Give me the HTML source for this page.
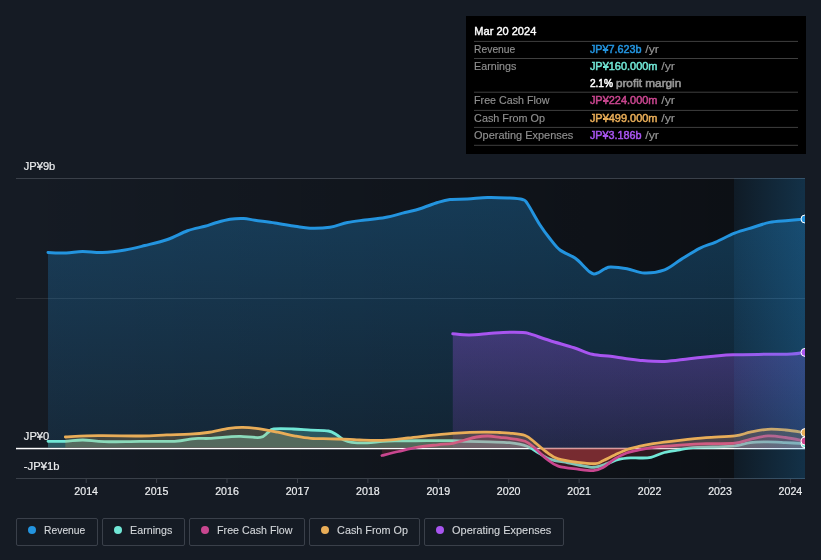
<!DOCTYPE html>
<html><head><meta charset="utf-8"><title>Earnings and Revenue History</title>
<style>
html,body{margin:0;padding:0;background:#151b24;}
body{width:821px;height:560px;overflow:hidden;}
svg{display:block;}
text{font-family:'Liberation Sans', sans-serif;font-size:10.8px;}
svg{will-change:transform;}
</style></head><body>
<svg width="821" height="560" viewBox="0 0 821 560">
<defs>
<linearGradient id="gPast" x1="0" y1="0" x2="1" y2="0"><stop offset="0" stop-color="#000" stop-opacity="0"/><stop offset="1" stop-color="#000" stop-opacity="0.42"/></linearGradient>
<linearGradient id="gHi" x1="0" y1="0" x2="1" y2="0"><stop offset="0" stop-color="#2394df" stop-opacity="0.07"/><stop offset="1" stop-color="#2394df" stop-opacity="0.24"/></linearGradient>
<linearGradient id="gRev" gradientUnits="userSpaceOnUse" x1="0" y1="197" x2="0" y2="448"><stop offset="0" stop-color="#2394df" stop-opacity="0.30"/><stop offset="1" stop-color="#2394df" stop-opacity="0.12"/></linearGradient>
<linearGradient id="gOpex" gradientUnits="userSpaceOnUse" x1="0" y1="332" x2="0" y2="448"><stop offset="0" stop-color="#a855f0" stop-opacity="0.30"/><stop offset="1" stop-color="#a855f0" stop-opacity="0.12"/></linearGradient>
<clipPath id="cPos"><rect x="16" y="170" width="789" height="277.8"/></clipPath>
<clipPath id="cNeg"><rect x="16" y="447.8" width="789" height="40"/></clipPath>
<clipPath id="cNeg2"><rect x="16" y="449.3" width="789" height="40"/></clipPath>
<clipPath id="cPlot"><rect x="16" y="170" width="789" height="320"/></clipPath>
</defs>
<rect width="821" height="560" fill="#151b24"/>

<rect x="16" y="178" width="718" height="301" fill="url(#gPast)"/>
<rect x="734" y="178" width="71" height="301" fill="#0e1218"/>
<rect x="16" y="178" width="789" height="1" fill="#3a4049"/>
<rect x="16" y="298" width="789" height="1" fill="#2a3038"/>
<rect x="16" y="447.8" width="789" height="1.5" fill="#ffffff"/>
<rect x="16" y="478" width="789" height="1" fill="#3a4049"/>
<rect x="85.7" y="479" width="1" height="4" fill="#3a4049"/>
<text x="86.2" y="495" text-anchor="middle" fill="#eceef0" stroke="#eceef0" stroke-width="0.2" textLength="23.7" lengthAdjust="spacingAndGlyphs">2014</text>
<rect x="156.1" y="479" width="1" height="4" fill="#3a4049"/>
<text x="156.6" y="495" text-anchor="middle" fill="#eceef0" stroke="#eceef0" stroke-width="0.2" textLength="23.7" lengthAdjust="spacingAndGlyphs">2015</text>
<rect x="226.5" y="479" width="1" height="4" fill="#3a4049"/>
<text x="227.0" y="495" text-anchor="middle" fill="#eceef0" stroke="#eceef0" stroke-width="0.2" textLength="23.7" lengthAdjust="spacingAndGlyphs">2016</text>
<rect x="297.0" y="479" width="1" height="4" fill="#3a4049"/>
<text x="297.5" y="495" text-anchor="middle" fill="#eceef0" stroke="#eceef0" stroke-width="0.2" textLength="23.7" lengthAdjust="spacingAndGlyphs">2017</text>
<rect x="367.4" y="479" width="1" height="4" fill="#3a4049"/>
<text x="367.9" y="495" text-anchor="middle" fill="#eceef0" stroke="#eceef0" stroke-width="0.2" textLength="23.7" lengthAdjust="spacingAndGlyphs">2018</text>
<rect x="437.8" y="479" width="1" height="4" fill="#3a4049"/>
<text x="438.3" y="495" text-anchor="middle" fill="#eceef0" stroke="#eceef0" stroke-width="0.2" textLength="23.7" lengthAdjust="spacingAndGlyphs">2019</text>
<rect x="508.2" y="479" width="1" height="4" fill="#3a4049"/>
<text x="508.7" y="495" text-anchor="middle" fill="#eceef0" stroke="#eceef0" stroke-width="0.2" textLength="23.7" lengthAdjust="spacingAndGlyphs">2020</text>
<rect x="578.6" y="479" width="1" height="4" fill="#3a4049"/>
<text x="579.1" y="495" text-anchor="middle" fill="#eceef0" stroke="#eceef0" stroke-width="0.2" textLength="23.7" lengthAdjust="spacingAndGlyphs">2021</text>
<rect x="649.1" y="479" width="1" height="4" fill="#3a4049"/>
<text x="649.6" y="495" text-anchor="middle" fill="#eceef0" stroke="#eceef0" stroke-width="0.2" textLength="23.7" lengthAdjust="spacingAndGlyphs">2022</text>
<rect x="719.5" y="479" width="1" height="4" fill="#3a4049"/>
<text x="720.0" y="495" text-anchor="middle" fill="#eceef0" stroke="#eceef0" stroke-width="0.2" textLength="23.7" lengthAdjust="spacingAndGlyphs">2023</text>
<rect x="789.9" y="479" width="1" height="4" fill="#3a4049"/>
<text x="790.4" y="495" text-anchor="middle" fill="#eceef0" stroke="#eceef0" stroke-width="0.2" textLength="23.7" lengthAdjust="spacingAndGlyphs">2024</text>
<g clip-path="url(#cPlot)">
<path d="M48.00,252.50C51.04,252.58 60.50,253.17 66.25,253.00C72.00,252.83 76.46,251.58 82.50,251.50C88.54,251.42 95.42,252.75 102.50,252.50C109.58,252.25 117.92,251.17 125.00,250.00C132.08,248.83 137.92,247.25 145.00,245.50C152.08,243.75 160.42,241.96 167.50,239.50C174.58,237.04 181.25,232.96 187.50,230.75C193.75,228.54 200.42,227.54 205.00,226.25C209.58,224.96 210.83,224.17 215.00,223.00C219.17,221.83 225.21,220.00 230.00,219.25C234.79,218.50 239.58,218.33 243.75,218.50C247.92,218.67 249.79,219.50 255.00,220.25C260.21,221.00 268.33,222.00 275.00,223.00C281.67,224.00 289.17,225.38 295.00,226.25C300.83,227.12 304.17,228.08 310.00,228.25C315.83,228.42 323.75,228.21 330.00,227.25C336.25,226.29 341.67,223.71 347.50,222.50C353.33,221.29 358.75,220.83 365.00,220.00C371.25,219.17 378.33,218.75 385.00,217.50C391.67,216.25 399.17,213.96 405.00,212.50C410.83,211.04 414.58,210.42 420.00,208.75C425.42,207.08 432.50,204.04 437.50,202.50C442.50,200.96 445.00,200.08 450.00,199.50C455.00,198.92 461.25,199.33 467.50,199.00C473.75,198.67 480.83,197.67 487.50,197.50C494.17,197.33 501.67,197.67 507.50,198.00C513.33,198.33 519.17,198.54 522.50,199.50C525.83,200.46 524.58,199.50 527.50,203.75C530.42,208.00 536.25,219.17 540.00,225.00C543.75,230.83 546.67,234.58 550.00,238.75C553.33,242.92 555.83,246.79 560.00,250.00C564.17,253.21 570.83,255.08 575.00,258.00C579.17,260.92 582.58,265.20 585.00,267.50C587.42,269.80 588.04,270.72 589.50,271.80C590.96,272.88 592.33,273.83 593.75,274.00C595.17,274.17 596.12,273.68 598.00,272.80C599.88,271.93 602.87,269.70 605.00,268.75C607.13,267.80 607.13,267.11 610.80,267.10C614.47,267.09 621.40,267.72 627.00,268.70C632.60,269.68 638.13,272.82 644.40,273.00C650.67,273.18 658.53,272.03 664.60,269.80C670.67,267.57 674.97,263.18 680.80,259.60C686.63,256.02 693.78,251.22 699.60,248.30C705.42,245.38 709.87,244.62 715.70,242.10C721.53,239.58 728.32,235.67 734.60,233.20C740.88,230.73 747.57,229.10 753.40,227.30C759.23,225.50 763.77,223.52 769.60,222.40C775.43,221.28 782.50,221.17 788.40,220.60C794.30,220.03 802.23,219.27 805.00,219.00L805.00,447.8L48.00,447.8Z" fill="url(#gRev)"/>
<path d="M48.00,252.50C51.04,252.58 60.50,253.17 66.25,253.00C72.00,252.83 76.46,251.58 82.50,251.50C88.54,251.42 95.42,252.75 102.50,252.50C109.58,252.25 117.92,251.17 125.00,250.00C132.08,248.83 137.92,247.25 145.00,245.50C152.08,243.75 160.42,241.96 167.50,239.50C174.58,237.04 181.25,232.96 187.50,230.75C193.75,228.54 200.42,227.54 205.00,226.25C209.58,224.96 210.83,224.17 215.00,223.00C219.17,221.83 225.21,220.00 230.00,219.25C234.79,218.50 239.58,218.33 243.75,218.50C247.92,218.67 249.79,219.50 255.00,220.25C260.21,221.00 268.33,222.00 275.00,223.00C281.67,224.00 289.17,225.38 295.00,226.25C300.83,227.12 304.17,228.08 310.00,228.25C315.83,228.42 323.75,228.21 330.00,227.25C336.25,226.29 341.67,223.71 347.50,222.50C353.33,221.29 358.75,220.83 365.00,220.00C371.25,219.17 378.33,218.75 385.00,217.50C391.67,216.25 399.17,213.96 405.00,212.50C410.83,211.04 414.58,210.42 420.00,208.75C425.42,207.08 432.50,204.04 437.50,202.50C442.50,200.96 445.00,200.08 450.00,199.50C455.00,198.92 461.25,199.33 467.50,199.00C473.75,198.67 480.83,197.67 487.50,197.50C494.17,197.33 501.67,197.67 507.50,198.00C513.33,198.33 519.17,198.54 522.50,199.50C525.83,200.46 524.58,199.50 527.50,203.75C530.42,208.00 536.25,219.17 540.00,225.00C543.75,230.83 546.67,234.58 550.00,238.75C553.33,242.92 555.83,246.79 560.00,250.00C564.17,253.21 570.83,255.08 575.00,258.00C579.17,260.92 582.58,265.20 585.00,267.50C587.42,269.80 588.04,270.72 589.50,271.80C590.96,272.88 592.33,273.83 593.75,274.00C595.17,274.17 596.12,273.68 598.00,272.80C599.88,271.93 602.87,269.70 605.00,268.75C607.13,267.80 607.13,267.11 610.80,267.10C614.47,267.09 621.40,267.72 627.00,268.70C632.60,269.68 638.13,272.82 644.40,273.00C650.67,273.18 658.53,272.03 664.60,269.80C670.67,267.57 674.97,263.18 680.80,259.60C686.63,256.02 693.78,251.22 699.60,248.30C705.42,245.38 709.87,244.62 715.70,242.10C721.53,239.58 728.32,235.67 734.60,233.20C740.88,230.73 747.57,229.10 753.40,227.30C759.23,225.50 763.77,223.52 769.60,222.40C775.43,221.28 782.50,221.17 788.40,220.60C794.30,220.03 802.23,219.27 805.00,219.00" fill="none" stroke="#2394df" stroke-width="3" stroke-linejoin="round" stroke-linecap="round"/>
<path d="M48.00,441.30C50.88,441.30 59.48,441.52 65.30,441.30C71.12,441.08 76.40,439.93 82.90,440.00C89.40,440.07 94.78,441.48 104.30,441.70C113.82,441.92 128.30,441.37 140.00,441.30C151.70,441.23 165.83,441.72 174.50,441.30C183.17,440.88 187.75,439.28 192.00,438.80C196.25,438.32 197.08,438.47 200.00,438.40C202.92,438.33 204.67,438.67 209.50,438.40C214.33,438.13 223.80,437.13 229.00,436.80C234.20,436.47 235.50,436.30 240.70,436.40C245.90,436.50 255.65,438.05 260.20,437.40C264.75,436.75 265.73,433.90 268.00,432.50C270.27,431.10 269.58,429.58 273.80,429.00C278.02,428.42 287.12,428.80 293.30,429.00C299.48,429.20 305.05,429.87 310.90,430.20C316.75,430.53 324.18,430.28 328.40,431.00C332.62,431.72 333.60,433.00 336.20,434.50C338.80,436.00 341.42,438.70 344.00,440.00C346.58,441.30 347.82,441.82 351.70,442.30C355.58,442.78 362.10,443.07 367.30,442.90C372.50,442.73 377.70,441.63 382.90,441.30C388.10,440.97 391.03,441.00 398.50,440.90C405.97,440.80 418.62,440.73 427.70,440.70C436.78,440.67 446.50,440.60 453.00,440.70C459.50,440.80 460.53,441.10 466.70,441.30C472.87,441.50 482.87,441.67 490.00,441.90C497.13,442.13 503.33,441.98 509.50,442.70C515.67,443.42 522.13,444.48 527.00,446.20C531.87,447.92 534.80,450.80 538.70,453.00C542.60,455.20 545.52,457.77 550.40,459.40C555.28,461.03 561.82,461.58 568.00,462.80C574.18,464.02 582.95,465.97 587.50,466.70C592.05,467.43 592.05,467.70 595.30,467.20C598.55,466.70 603.10,465.00 607.00,463.70C610.90,462.40 614.80,460.37 618.70,459.40C622.60,458.43 626.85,458.13 630.40,457.90C633.95,457.67 636.57,458.10 640.00,458.00C643.43,457.90 646.95,458.22 651.00,457.30C655.05,456.38 659.52,453.75 664.30,452.50C669.08,451.25 674.93,450.62 679.70,449.80C684.47,448.98 687.38,448.07 692.90,447.60C698.42,447.13 705.82,447.28 712.80,447.00C719.78,446.72 728.57,446.63 734.80,445.90C741.03,445.17 744.68,443.27 750.20,442.60C755.72,441.93 762.02,441.90 767.90,441.90C773.78,441.90 779.32,442.30 785.50,442.60C791.68,442.90 801.75,443.52 805.00,443.70L805.00,447.8L48.00,447.8Z" fill="#71e7d6" fill-opacity="0.25" clip-path="url(#cPos)"/>
<path d="M48.00,441.30C50.88,441.30 59.48,441.52 65.30,441.30C71.12,441.08 76.40,439.93 82.90,440.00C89.40,440.07 94.78,441.48 104.30,441.70C113.82,441.92 128.30,441.37 140.00,441.30C151.70,441.23 165.83,441.72 174.50,441.30C183.17,440.88 187.75,439.28 192.00,438.80C196.25,438.32 197.08,438.47 200.00,438.40C202.92,438.33 204.67,438.67 209.50,438.40C214.33,438.13 223.80,437.13 229.00,436.80C234.20,436.47 235.50,436.30 240.70,436.40C245.90,436.50 255.65,438.05 260.20,437.40C264.75,436.75 265.73,433.90 268.00,432.50C270.27,431.10 269.58,429.58 273.80,429.00C278.02,428.42 287.12,428.80 293.30,429.00C299.48,429.20 305.05,429.87 310.90,430.20C316.75,430.53 324.18,430.28 328.40,431.00C332.62,431.72 333.60,433.00 336.20,434.50C338.80,436.00 341.42,438.70 344.00,440.00C346.58,441.30 347.82,441.82 351.70,442.30C355.58,442.78 362.10,443.07 367.30,442.90C372.50,442.73 377.70,441.63 382.90,441.30C388.10,440.97 391.03,441.00 398.50,440.90C405.97,440.80 418.62,440.73 427.70,440.70C436.78,440.67 446.50,440.60 453.00,440.70C459.50,440.80 460.53,441.10 466.70,441.30C472.87,441.50 482.87,441.67 490.00,441.90C497.13,442.13 503.33,441.98 509.50,442.70C515.67,443.42 522.13,444.48 527.00,446.20C531.87,447.92 534.80,450.80 538.70,453.00C542.60,455.20 545.52,457.77 550.40,459.40C555.28,461.03 561.82,461.58 568.00,462.80C574.18,464.02 582.95,465.97 587.50,466.70C592.05,467.43 592.05,467.70 595.30,467.20C598.55,466.70 603.10,465.00 607.00,463.70C610.90,462.40 614.80,460.37 618.70,459.40C622.60,458.43 626.85,458.13 630.40,457.90C633.95,457.67 636.57,458.10 640.00,458.00C643.43,457.90 646.95,458.22 651.00,457.30C655.05,456.38 659.52,453.75 664.30,452.50C669.08,451.25 674.93,450.62 679.70,449.80C684.47,448.98 687.38,448.07 692.90,447.60C698.42,447.13 705.82,447.28 712.80,447.00C719.78,446.72 728.57,446.63 734.80,445.90C741.03,445.17 744.68,443.27 750.20,442.60C755.72,441.93 762.02,441.90 767.90,441.90C773.78,441.90 779.32,442.30 785.50,442.60C791.68,442.90 801.75,443.52 805.00,443.70L805.00,447.8L48.00,447.8Z" fill="#b83c42" fill-opacity="0.2" clip-path="url(#cNeg)"/>
<path d="M48.00,441.30C50.88,441.30 59.48,441.52 65.30,441.30C71.12,441.08 76.40,439.93 82.90,440.00C89.40,440.07 94.78,441.48 104.30,441.70C113.82,441.92 128.30,441.37 140.00,441.30C151.70,441.23 165.83,441.72 174.50,441.30C183.17,440.88 187.75,439.28 192.00,438.80C196.25,438.32 197.08,438.47 200.00,438.40C202.92,438.33 204.67,438.67 209.50,438.40C214.33,438.13 223.80,437.13 229.00,436.80C234.20,436.47 235.50,436.30 240.70,436.40C245.90,436.50 255.65,438.05 260.20,437.40C264.75,436.75 265.73,433.90 268.00,432.50C270.27,431.10 269.58,429.58 273.80,429.00C278.02,428.42 287.12,428.80 293.30,429.00C299.48,429.20 305.05,429.87 310.90,430.20C316.75,430.53 324.18,430.28 328.40,431.00C332.62,431.72 333.60,433.00 336.20,434.50C338.80,436.00 341.42,438.70 344.00,440.00C346.58,441.30 347.82,441.82 351.70,442.30C355.58,442.78 362.10,443.07 367.30,442.90C372.50,442.73 377.70,441.63 382.90,441.30C388.10,440.97 391.03,441.00 398.50,440.90C405.97,440.80 418.62,440.73 427.70,440.70C436.78,440.67 446.50,440.60 453.00,440.70C459.50,440.80 460.53,441.10 466.70,441.30C472.87,441.50 482.87,441.67 490.00,441.90C497.13,442.13 503.33,441.98 509.50,442.70C515.67,443.42 522.13,444.48 527.00,446.20C531.87,447.92 534.80,450.80 538.70,453.00C542.60,455.20 545.52,457.77 550.40,459.40C555.28,461.03 561.82,461.58 568.00,462.80C574.18,464.02 582.95,465.97 587.50,466.70C592.05,467.43 592.05,467.70 595.30,467.20C598.55,466.70 603.10,465.00 607.00,463.70C610.90,462.40 614.80,460.37 618.70,459.40C622.60,458.43 626.85,458.13 630.40,457.90C633.95,457.67 636.57,458.10 640.00,458.00C643.43,457.90 646.95,458.22 651.00,457.30C655.05,456.38 659.52,453.75 664.30,452.50C669.08,451.25 674.93,450.62 679.70,449.80C684.47,448.98 687.38,448.07 692.90,447.60C698.42,447.13 705.82,447.28 712.80,447.00C719.78,446.72 728.57,446.63 734.80,445.90C741.03,445.17 744.68,443.27 750.20,442.60C755.72,441.93 762.02,441.90 767.90,441.90C773.78,441.90 779.32,442.30 785.50,442.60C791.68,442.90 801.75,443.52 805.00,443.70" fill="none" stroke="#71e7d6" stroke-width="2.8" stroke-linejoin="round" stroke-linecap="round"/>
<path d="M452.80,333.80C455.53,334.00 463.22,335.03 469.20,335.00C475.18,334.97 483.02,334.03 488.70,333.60C494.38,333.17 497.62,332.60 503.30,332.40C508.98,332.20 518.33,332.15 522.80,332.40C527.27,332.65 525.63,332.55 530.10,333.90C534.57,335.25 542.28,338.18 549.60,340.50C556.92,342.82 566.88,345.50 574.00,347.80C581.12,350.10 586.22,352.88 592.30,354.30C598.38,355.72 605.03,355.60 610.50,356.30C615.97,357.00 620.10,357.82 625.10,358.50C630.10,359.18 633.88,359.92 640.50,360.40C647.12,360.88 656.68,361.68 664.80,361.40C672.92,361.12 681.07,359.55 689.20,358.70C697.33,357.85 706.30,356.95 713.60,356.30C720.90,355.65 724.07,355.13 733.00,354.80C741.93,354.47 757.45,354.42 767.20,354.30C776.95,354.18 785.20,354.42 791.50,354.10C797.80,353.78 802.75,352.68 805.00,352.40L805.00,447.8L452.80,447.8Z" fill="url(#gOpex)"/>
<path d="M452.80,333.80C455.53,334.00 463.22,335.03 469.20,335.00C475.18,334.97 483.02,334.03 488.70,333.60C494.38,333.17 497.62,332.60 503.30,332.40C508.98,332.20 518.33,332.15 522.80,332.40C527.27,332.65 525.63,332.55 530.10,333.90C534.57,335.25 542.28,338.18 549.60,340.50C556.92,342.82 566.88,345.50 574.00,347.80C581.12,350.10 586.22,352.88 592.30,354.30C598.38,355.72 605.03,355.60 610.50,356.30C615.97,357.00 620.10,357.82 625.10,358.50C630.10,359.18 633.88,359.92 640.50,360.40C647.12,360.88 656.68,361.68 664.80,361.40C672.92,361.12 681.07,359.55 689.20,358.70C697.33,357.85 706.30,356.95 713.60,356.30C720.90,355.65 724.07,355.13 733.00,354.80C741.93,354.47 757.45,354.42 767.20,354.30C776.95,354.18 785.20,354.42 791.50,354.10C797.80,353.78 802.75,352.68 805.00,352.40" fill="none" stroke="#a855f0" stroke-width="3" stroke-linejoin="round" stroke-linecap="round"/>
<path d="M381.90,455.50C384.67,454.83 392.48,452.88 398.50,451.50C404.52,450.12 411.50,448.32 418.00,447.20C424.50,446.08 431.67,445.45 437.50,444.80C443.33,444.15 448.45,444.10 453.00,443.30C457.55,442.50 460.88,441.05 464.80,440.00C468.72,438.95 472.62,437.67 476.50,437.00C480.38,436.33 484.22,435.93 488.10,436.00C491.98,436.07 496.23,437.00 499.80,437.40C503.37,437.80 505.28,437.75 509.50,438.40C513.72,439.05 520.88,439.68 525.10,441.30C529.32,442.92 531.23,445.17 534.80,448.10C538.37,451.03 542.60,455.90 546.50,458.90C550.40,461.90 553.00,464.38 558.20,466.10C563.40,467.82 571.85,468.45 577.70,469.20C583.55,469.95 589.08,470.87 593.30,470.60C597.52,470.33 599.42,469.55 603.00,467.60C606.58,465.65 610.88,461.33 614.80,458.90C618.72,456.47 622.62,454.47 626.50,453.00C630.38,451.53 633.65,451.03 638.10,450.10C642.55,449.17 646.27,448.22 653.20,447.40C660.13,446.58 670.88,445.82 679.70,445.20C688.52,444.58 696.92,444.03 706.10,443.70C715.28,443.37 727.45,443.93 734.80,443.20C742.15,442.47 744.68,440.52 750.20,439.30C755.72,438.08 762.02,436.20 767.90,435.90C773.78,435.60 779.32,436.65 785.50,437.50C791.68,438.35 801.75,440.42 805.00,441.00L805.00,447.8L381.90,447.8Z" fill="#c9468f" fill-opacity="0.16" clip-path="url(#cPos)"/>
<path d="M381.90,455.50C384.67,454.83 392.48,452.88 398.50,451.50C404.52,450.12 411.50,448.32 418.00,447.20C424.50,446.08 431.67,445.45 437.50,444.80C443.33,444.15 448.45,444.10 453.00,443.30C457.55,442.50 460.88,441.05 464.80,440.00C468.72,438.95 472.62,437.67 476.50,437.00C480.38,436.33 484.22,435.93 488.10,436.00C491.98,436.07 496.23,437.00 499.80,437.40C503.37,437.80 505.28,437.75 509.50,438.40C513.72,439.05 520.88,439.68 525.10,441.30C529.32,442.92 531.23,445.17 534.80,448.10C538.37,451.03 542.60,455.90 546.50,458.90C550.40,461.90 553.00,464.38 558.20,466.10C563.40,467.82 571.85,468.45 577.70,469.20C583.55,469.95 589.08,470.87 593.30,470.60C597.52,470.33 599.42,469.55 603.00,467.60C606.58,465.65 610.88,461.33 614.80,458.90C618.72,456.47 622.62,454.47 626.50,453.00C630.38,451.53 633.65,451.03 638.10,450.10C642.55,449.17 646.27,448.22 653.20,447.40C660.13,446.58 670.88,445.82 679.70,445.20C688.52,444.58 696.92,444.03 706.10,443.70C715.28,443.37 727.45,443.93 734.80,443.20C742.15,442.47 744.68,440.52 750.20,439.30C755.72,438.08 762.02,436.20 767.90,435.90C773.78,435.60 779.32,436.65 785.50,437.50C791.68,438.35 801.75,440.42 805.00,441.00L805.00,447.8L381.90,447.8Z" fill="#b83c42" fill-opacity="0.2" clip-path="url(#cNeg2)"/>
<path d="M381.90,455.50C384.67,454.83 392.48,452.88 398.50,451.50C404.52,450.12 411.50,448.32 418.00,447.20C424.50,446.08 431.67,445.45 437.50,444.80C443.33,444.15 448.45,444.10 453.00,443.30C457.55,442.50 460.88,441.05 464.80,440.00C468.72,438.95 472.62,437.67 476.50,437.00C480.38,436.33 484.22,435.93 488.10,436.00C491.98,436.07 496.23,437.00 499.80,437.40C503.37,437.80 505.28,437.75 509.50,438.40C513.72,439.05 520.88,439.68 525.10,441.30C529.32,442.92 531.23,445.17 534.80,448.10C538.37,451.03 542.60,455.90 546.50,458.90C550.40,461.90 553.00,464.38 558.20,466.10C563.40,467.82 571.85,468.45 577.70,469.20C583.55,469.95 589.08,470.87 593.30,470.60C597.52,470.33 599.42,469.55 603.00,467.60C606.58,465.65 610.88,461.33 614.80,458.90C618.72,456.47 622.62,454.47 626.50,453.00C630.38,451.53 633.65,451.03 638.10,450.10C642.55,449.17 646.27,448.22 653.20,447.40C660.13,446.58 670.88,445.82 679.70,445.20C688.52,444.58 696.92,444.03 706.10,443.70C715.28,443.37 727.45,443.93 734.80,443.20C742.15,442.47 744.68,440.52 750.20,439.30C755.72,438.08 762.02,436.20 767.90,435.90C773.78,435.60 779.32,436.65 785.50,437.50C791.68,438.35 801.75,440.42 805.00,441.00" fill="none" stroke="#c9468f" stroke-width="2.8" stroke-linejoin="round" stroke-linecap="round"/>
<path d="M65.30,437.00C70.83,436.78 85.82,435.87 98.50,435.70C111.18,435.53 130.03,436.13 141.40,436.00C152.77,435.87 158.60,435.20 166.70,434.90C174.80,434.60 183.20,434.60 190.00,434.20C196.80,433.80 201.00,433.48 207.50,432.50C214.00,431.52 223.15,429.17 229.00,428.30C234.85,427.43 237.73,427.25 242.60,427.30C247.47,427.35 252.35,427.78 258.20,428.60C264.05,429.42 271.52,430.95 277.70,432.20C283.88,433.45 289.77,435.07 295.30,436.10C300.83,437.13 305.05,437.95 310.90,438.40C316.75,438.85 323.92,438.63 330.40,438.80C336.88,438.97 344.95,439.20 349.80,439.40C354.65,439.60 353.98,439.85 359.50,440.00C365.02,440.15 374.78,440.63 382.90,440.30C391.02,439.97 399.75,438.87 408.20,438.00C416.65,437.13 425.47,435.92 433.60,435.10C441.73,434.28 448.57,433.58 457.00,433.10C465.43,432.62 477.07,432.30 484.20,432.20C491.33,432.10 495.58,432.35 499.80,432.50C504.02,432.65 505.28,432.60 509.50,433.10C513.72,433.60 520.88,433.97 525.10,435.50C529.32,437.03 531.23,439.55 534.80,442.30C538.37,445.05 542.60,449.23 546.50,452.00C550.40,454.77 553.00,457.17 558.20,458.90C563.40,460.63 571.52,461.60 577.70,462.40C583.88,463.20 591.08,463.97 595.30,463.70C599.52,463.43 599.75,462.25 603.00,460.80C606.25,459.35 610.88,456.85 614.80,455.00C618.72,453.15 622.62,451.10 626.50,449.70C630.38,448.30 633.65,447.60 638.10,446.60C642.55,445.60 646.27,444.73 653.20,443.70C660.13,442.67 670.88,441.40 679.70,440.40C688.52,439.40 696.92,438.45 706.10,437.70C715.28,436.95 727.45,436.82 734.80,435.90C742.15,434.98 744.68,433.30 750.20,432.20C755.72,431.10 762.02,429.67 767.90,429.30C773.78,428.93 779.32,429.45 785.50,430.00C791.68,430.55 801.75,432.17 805.00,432.60L805.00,447.8L65.30,447.8Z" fill="#e9ad58" fill-opacity="0.22" clip-path="url(#cPos)"/>
<path d="M65.30,437.00C70.83,436.78 85.82,435.87 98.50,435.70C111.18,435.53 130.03,436.13 141.40,436.00C152.77,435.87 158.60,435.20 166.70,434.90C174.80,434.60 183.20,434.60 190.00,434.20C196.80,433.80 201.00,433.48 207.50,432.50C214.00,431.52 223.15,429.17 229.00,428.30C234.85,427.43 237.73,427.25 242.60,427.30C247.47,427.35 252.35,427.78 258.20,428.60C264.05,429.42 271.52,430.95 277.70,432.20C283.88,433.45 289.77,435.07 295.30,436.10C300.83,437.13 305.05,437.95 310.90,438.40C316.75,438.85 323.92,438.63 330.40,438.80C336.88,438.97 344.95,439.20 349.80,439.40C354.65,439.60 353.98,439.85 359.50,440.00C365.02,440.15 374.78,440.63 382.90,440.30C391.02,439.97 399.75,438.87 408.20,438.00C416.65,437.13 425.47,435.92 433.60,435.10C441.73,434.28 448.57,433.58 457.00,433.10C465.43,432.62 477.07,432.30 484.20,432.20C491.33,432.10 495.58,432.35 499.80,432.50C504.02,432.65 505.28,432.60 509.50,433.10C513.72,433.60 520.88,433.97 525.10,435.50C529.32,437.03 531.23,439.55 534.80,442.30C538.37,445.05 542.60,449.23 546.50,452.00C550.40,454.77 553.00,457.17 558.20,458.90C563.40,460.63 571.52,461.60 577.70,462.40C583.88,463.20 591.08,463.97 595.30,463.70C599.52,463.43 599.75,462.25 603.00,460.80C606.25,459.35 610.88,456.85 614.80,455.00C618.72,453.15 622.62,451.10 626.50,449.70C630.38,448.30 633.65,447.60 638.10,446.60C642.55,445.60 646.27,444.73 653.20,443.70C660.13,442.67 670.88,441.40 679.70,440.40C688.52,439.40 696.92,438.45 706.10,437.70C715.28,436.95 727.45,436.82 734.80,435.90C742.15,434.98 744.68,433.30 750.20,432.20C755.72,431.10 762.02,429.67 767.90,429.30C773.78,428.93 779.32,429.45 785.50,430.00C791.68,430.55 801.75,432.17 805.00,432.60L805.00,447.8L65.30,447.8Z" fill="#b83c42" fill-opacity="0.4" clip-path="url(#cNeg)"/>
<path d="M65.30,437.00C70.83,436.78 85.82,435.87 98.50,435.70C111.18,435.53 130.03,436.13 141.40,436.00C152.77,435.87 158.60,435.20 166.70,434.90C174.80,434.60 183.20,434.60 190.00,434.20C196.80,433.80 201.00,433.48 207.50,432.50C214.00,431.52 223.15,429.17 229.00,428.30C234.85,427.43 237.73,427.25 242.60,427.30C247.47,427.35 252.35,427.78 258.20,428.60C264.05,429.42 271.52,430.95 277.70,432.20C283.88,433.45 289.77,435.07 295.30,436.10C300.83,437.13 305.05,437.95 310.90,438.40C316.75,438.85 323.92,438.63 330.40,438.80C336.88,438.97 344.95,439.20 349.80,439.40C354.65,439.60 353.98,439.85 359.50,440.00C365.02,440.15 374.78,440.63 382.90,440.30C391.02,439.97 399.75,438.87 408.20,438.00C416.65,437.13 425.47,435.92 433.60,435.10C441.73,434.28 448.57,433.58 457.00,433.10C465.43,432.62 477.07,432.30 484.20,432.20C491.33,432.10 495.58,432.35 499.80,432.50C504.02,432.65 505.28,432.60 509.50,433.10C513.72,433.60 520.88,433.97 525.10,435.50C529.32,437.03 531.23,439.55 534.80,442.30C538.37,445.05 542.60,449.23 546.50,452.00C550.40,454.77 553.00,457.17 558.20,458.90C563.40,460.63 571.52,461.60 577.70,462.40C583.88,463.20 591.08,463.97 595.30,463.70C599.52,463.43 599.75,462.25 603.00,460.80C606.25,459.35 610.88,456.85 614.80,455.00C618.72,453.15 622.62,451.10 626.50,449.70C630.38,448.30 633.65,447.60 638.10,446.60C642.55,445.60 646.27,444.73 653.20,443.70C660.13,442.67 670.88,441.40 679.70,440.40C688.52,439.40 696.92,438.45 706.10,437.70C715.28,436.95 727.45,436.82 734.80,435.90C742.15,434.98 744.68,433.30 750.20,432.20C755.72,431.10 762.02,429.67 767.90,429.30C773.78,428.93 779.32,429.45 785.50,430.00C791.68,430.55 801.75,432.17 805.00,432.60" fill="none" stroke="#e9ad58" stroke-width="2.8" stroke-linejoin="round" stroke-linecap="round"/>
<rect x="734" y="178" width="71" height="301" fill="url(#gHi)"/>
<circle cx="805" cy="219" r="4" fill="#2394df" stroke="#ffffff" stroke-width="1"/>
<circle cx="805" cy="352.4" r="4" fill="#a855f0" stroke="#ffffff" stroke-width="1"/>
<circle cx="805" cy="443.7" r="4" fill="#71e7d6" stroke="#ffffff" stroke-width="1"/>
<circle cx="805" cy="441" r="4" fill="#c9468f" stroke="#ffffff" stroke-width="1"/>
<circle cx="805" cy="432.6" r="4" fill="#e9ad58" stroke="#ffffff" stroke-width="1"/>
</g>
<text x="23.8" y="170" fill="#eceef0" stroke="#eceef0" stroke-width="0.2" textLength="31.5" lengthAdjust="spacingAndGlyphs">JP¥9b</text>
<text x="23.8" y="439.8" fill="#eceef0" stroke="#eceef0" stroke-width="0.2" textLength="25.5" lengthAdjust="spacingAndGlyphs">JP¥0</text>
<text x="23.8" y="469.8" fill="#eceef0" stroke="#eceef0" stroke-width="0.2" textLength="35.6" lengthAdjust="spacingAndGlyphs">-JP¥1b</text>
<rect x="466" y="16" width="340" height="138" fill="#000000"/>
<text x="474.3" y="35" fill="#ffffff" stroke="#ffffff" stroke-width="0.4" textLength="62" lengthAdjust="spacingAndGlyphs">Mar 20 2024</text>
<rect x="474" y="40.9" width="324" height="1" fill="#3f3f3f"/>
<rect x="474" y="58.0" width="324" height="1" fill="#3f3f3f"/>
<rect x="474" y="91.7" width="324" height="1" fill="#3f3f3f"/>
<rect x="474" y="109.9" width="324" height="1" fill="#3f3f3f"/>
<rect x="474" y="126.9" width="324" height="1" fill="#3f3f3f"/>
<rect x="474" y="144.8" width="324" height="1" fill="#3f3f3f"/>
<text x="474.1" y="52.5" fill="#909090" stroke="#909090" stroke-width="0.15" textLength="41.2" lengthAdjust="spacingAndGlyphs">Revenue</text>
<text x="589.9" y="52.5" fill="#2394df" stroke="#2394df" stroke-width="0.5">JP¥7.623b</text>
<text x="645.2" y="52.5" fill="#979797" stroke="#979797" stroke-width="0.15" textLength="13.8" lengthAdjust="spacingAndGlyphs">/yr</text>
<text x="474.1" y="69.7" fill="#909090" stroke="#909090" stroke-width="0.15" textLength="42.2" lengthAdjust="spacingAndGlyphs">Earnings</text>
<text x="589.9" y="69.7" fill="#71e7d6" stroke="#71e7d6" stroke-width="0.5" textLength="67.6" lengthAdjust="spacingAndGlyphs">JP¥160.000m</text>
<text x="661.2" y="69.7" fill="#979797" stroke="#979797" stroke-width="0.15" textLength="13.8" lengthAdjust="spacingAndGlyphs">/yr</text>
<text x="474.1" y="103.9" fill="#909090" stroke="#909090" stroke-width="0.15" textLength="75.4" lengthAdjust="spacingAndGlyphs">Free Cash Flow</text>
<text x="589.9" y="103.9" fill="#c9468f" stroke="#c9468f" stroke-width="0.5" textLength="67.6" lengthAdjust="spacingAndGlyphs">JP¥224.000m</text>
<text x="661.2" y="103.9" fill="#979797" stroke="#979797" stroke-width="0.15" textLength="13.8" lengthAdjust="spacingAndGlyphs">/yr</text>
<text x="474.1" y="121.8" fill="#909090" stroke="#909090" stroke-width="0.15" textLength="70.8" lengthAdjust="spacingAndGlyphs">Cash From Op</text>
<text x="589.9" y="121.8" fill="#e9ad58" stroke="#e9ad58" stroke-width="0.5" textLength="67.6" lengthAdjust="spacingAndGlyphs">JP¥499.000m</text>
<text x="661.2" y="121.8" fill="#979797" stroke="#979797" stroke-width="0.15" textLength="13.8" lengthAdjust="spacingAndGlyphs">/yr</text>
<text x="474.1" y="138.9" fill="#909090" stroke="#909090" stroke-width="0.15" textLength="99.2" lengthAdjust="spacingAndGlyphs">Operating Expenses</text>
<text x="589.9" y="138.9" fill="#a855f0" stroke="#a855f0" stroke-width="0.5">JP¥3.186b</text>
<text x="645.2" y="138.9" fill="#979797" stroke="#979797" stroke-width="0.15" textLength="13.8" lengthAdjust="spacingAndGlyphs">/yr</text>
<text x="589.9" y="86.8" fill="#ffffff" stroke="#ffffff" stroke-width="0.5" textLength="23.1" lengthAdjust="spacingAndGlyphs">2.1%</text>
<text x="615.9" y="86.8" fill="#979797" stroke="#979797" stroke-width="0.55" textLength="65.4" lengthAdjust="spacingAndGlyphs">profit margin</text>
<rect x="16.5" y="518.5" width="81" height="27" rx="1.5" fill="none" stroke="#3a404a" stroke-width="1"/>
<circle cx="32.0" cy="530" r="4" fill="#2394df"/>
<text x="44.1" y="534" fill="#d4d7db" stroke="#d4d7db" stroke-width="0.1" textLength="41.2" lengthAdjust="spacingAndGlyphs">Revenue</text>
<rect x="102.5" y="518.5" width="82" height="27" rx="1.5" fill="none" stroke="#3a404a" stroke-width="1"/>
<circle cx="118.0" cy="530" r="4" fill="#71e7d6"/>
<text x="130.1" y="534" fill="#d4d7db" stroke="#d4d7db" stroke-width="0.1" textLength="42.2" lengthAdjust="spacingAndGlyphs">Earnings</text>
<rect x="189.5" y="518.5" width="115" height="27" rx="1.5" fill="none" stroke="#3a404a" stroke-width="1"/>
<circle cx="205.0" cy="530" r="4" fill="#c9468f"/>
<text x="217.1" y="534" fill="#d4d7db" stroke="#d4d7db" stroke-width="0.1" textLength="75.4" lengthAdjust="spacingAndGlyphs">Free Cash Flow</text>
<rect x="309.5" y="518.5" width="110" height="27" rx="1.5" fill="none" stroke="#3a404a" stroke-width="1"/>
<circle cx="325.0" cy="530" r="4" fill="#e9ad58"/>
<text x="337.1" y="534" fill="#d4d7db" stroke="#d4d7db" stroke-width="0.1" textLength="70.8" lengthAdjust="spacingAndGlyphs">Cash From Op</text>
<rect x="424.5" y="518.5" width="139" height="27" rx="1.5" fill="none" stroke="#3a404a" stroke-width="1"/>
<circle cx="440.0" cy="530" r="4" fill="#a855f0"/>
<text x="452.1" y="534" fill="#d4d7db" stroke="#d4d7db" stroke-width="0.1" textLength="99.2" lengthAdjust="spacingAndGlyphs">Operating Expenses</text>
</svg></body></html>
